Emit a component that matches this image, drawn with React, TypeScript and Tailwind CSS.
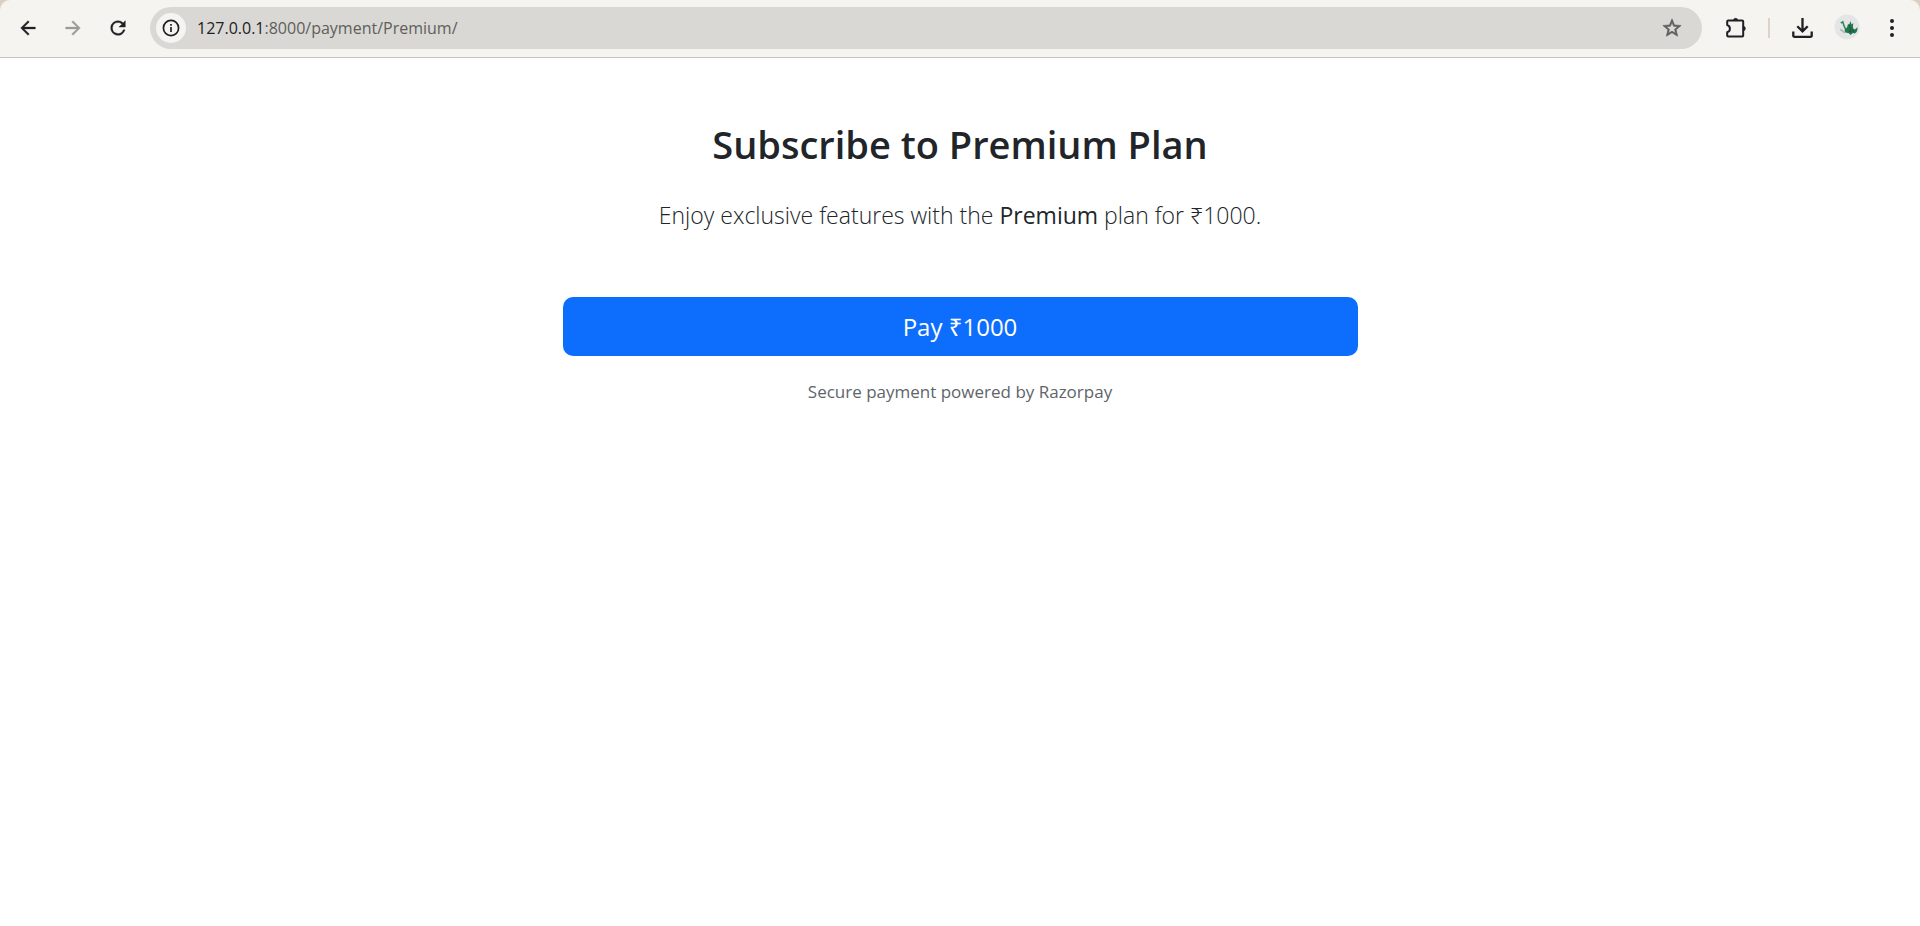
import type { ReactNode } from "react";

function ToolbarButton({ label, disabled, children }: { label: string; disabled?: boolean; children: ReactNode }) {
  return (
    <button
      type="button"
      aria-label={label}
      disabled={disabled}
      className="flex size-10 shrink-0 items-center justify-center rounded-full text-[#1f2023] disabled:text-[#9b9a98]"
    >
      {children}
    </button>
  );
}

function BrowserToolbar() {
  return (
    <div className="bg-[#ddd0c0]">
      <header className="flex h-[58px] items-center rounded-t-[10px] border-b border-[#c3c2c0] bg-[#f5f4f0] px-2 pb-px">
        <nav aria-label="Browser navigation" className="flex gap-[5px]">
          <ToolbarButton label="Back">
            <svg viewBox="0 0 24 24" className="size-[22px]" fill="currentColor" stroke="currentColor" strokeWidth="0.4">
              <path d="M20 11H7.83l5.59-5.59L12 4l-8 8 8 8 1.41-1.41L7.83 13H20z" />
            </svg>
          </ToolbarButton>
          <ToolbarButton label="Forward" disabled>
            <svg viewBox="0 0 24 24" className="size-[22px]" fill="currentColor" stroke="currentColor" strokeWidth="0.4">
              <path d="M12 4l-1.41 1.41L16.17 11H4v2h12.17l-5.58 5.59L12 20l8-8z" />
            </svg>
          </ToolbarButton>
          <ToolbarButton label="Reload">
            <svg viewBox="0 0 24 24" className="size-[22px]" fill="currentColor" stroke="currentColor" strokeWidth="0.4">
              <path d="M17.65 6.35A7.96 7.96 0 0 0 12 4a8 8 0 1 0 7.73 10h-2.08A6 6 0 1 1 12 6c1.66 0 3.14.69 4.22 1.78L13 11h7V4z" />
            </svg>
          </ToolbarButton>
        </nav>
        <div className="ml-3 flex h-[42px] min-w-0 flex-1 items-center rounded-full bg-[#d9d8d4] pr-2 pl-1.5">
          <button
            type="button"
            aria-label="View site information"
            className="flex size-[30px] shrink-0 items-center justify-center rounded-full bg-[#f5f4f0] text-[#1f2023]"
          >
            <svg viewBox="0 0 18 18" className="size-[18px]" fill="none" stroke="currentColor">
              <circle cx="9" cy="9" r="7.6" strokeWidth="1.7" />
              <path d="M9 8v5" strokeWidth="1.7" />
              <path d="M9 5v1.8" strokeWidth="1.7" />
            </svg>
          </button>
          <a href="#" className="ml-[11px] flex-1 truncate text-[16px] leading-6 text-[#5f5e5c]">
            <span className="text-[#1f2023]">127.0.0.1</span>:8000/payment/Premium/
          </a>
          <button
            type="button"
            aria-label="Bookmark this page"
            className="flex size-11 shrink-0 items-center justify-center text-[#5c5c5e]"
          >
            <svg viewBox="0 0 24 24" className="size-[22px]" fill="currentColor" stroke="currentColor" strokeWidth="0.6">
              <path d="M22 9.24l-7.19-.62L12 2 9.19 8.63 2 9.24l5.46 4.73L5.82 21 12 17.27 18.18 21l-1.63-7.03zM12 15.4l-3.76 2.27 1-4.28-3.32-2.88 4.38-.38L12 6.1l1.71 4.04 4.38.38-3.32 2.88 1 4.28z" />
            </svg>
          </button>
        </div>
        <div className="ml-[14px] flex items-center">
          <ToolbarButton label="Extensions">
            <svg viewBox="0 0 24 24" className="size-6" fill="none" stroke="currentColor" strokeWidth="2" strokeLinejoin="round">
              <path d="M4.2 4.500H18.200a1 1 0 0 1 1 1V19.500a1 1 0 0 1-1 1H4.200a1 1 0 0 1-1-1V16.200C6.800 15.200 6.800 10.200 3.200 9V5.500a1 1 0 0 1 1-1z" />
              <path d="M9.400 4.500a2.200 2.200 0 0 1 4.400 0zM19.200 10.300a2.200 2.200 0 0 1 0 4.400z" fill="currentColor" strokeWidth="0.6" />
            </svg>
          </ToolbarButton>
          <span className="mx-3 h-5 w-0.5 bg-[#dfd3c4]" />
          <ToolbarButton label="Downloads">
            <svg viewBox="0 0 24 24" className="size-6" fill="none" stroke="currentColor" strokeWidth="2.300">
              <path d="M12.500 2v13M7.300 10.200l5.200 5.200 5.200-5.200" />
              <path d="M3.300 15.500v4.200a1.200 1.200 0 0 0 1.200 1.200h16a1.200 1.200 0 0 0 1.200-1.200v-4.200" />
            </svg>
          </ToolbarButton>
          <span className="w-[5px]" />
          <ToolbarButton label="Profile">
            <svg viewBox="0 0 26 26" className="mb-0.5 size-[26px]">
              <circle cx="13" cy="13" r="12.5" fill="#e4e5e6" />
              <path d="M6 14.500l2.500 1 3 3.500-1.500.5-2-2-1.500-.5z" fill="#b0b8b5" />
              <path d="M6.800 9l2-1.200c.8 3.200 1.500 6.200 3.900 8.600" fill="none" stroke="#2b8a5e" strokeWidth="1.500" />
              <path d="M11 15l2-1.500 1-3.500 1.200.5 1.300-3.500 1 3.500 1.800-1.500-.4 4 1 2.500 1.600-.5 2-1.800c.2 3-.7 5.300-2.700 6.300l-1.800-.5-2.500 2-2-2-2.700-.2-1.300-1.800z" fill="#24784f" />
              <path d="M15.500 11l1 4-1.200 3 2.200-.5M18.500 15l1 3" fill="none" stroke="#164f38" strokeWidth="0.900" />
            </svg>
          </ToolbarButton>
          <span className="w-[5px]" />
          <ToolbarButton label="Browser menu">
            <svg viewBox="0 0 24 24" className="size-6" fill="currentColor">
              <circle cx="12" cy="5" r="2" />
              <circle cx="12" cy="12" r="2" />
              <circle cx="12" cy="19" r="2" />
            </svg>
          </ToolbarButton>
        </div>
      </header>
    </div>
  );
}

export default function App() {
  return (
    <div className="min-h-screen bg-white font-['Open_Sans','Noto_Sans',sans-serif] text-[#212529]">
      <BrowserToolbar />
      <main className="mx-auto flex max-w-[795px] flex-col pt-[60px] text-center">
        <h1 className="text-[38px] leading-[52px] font-semibold">Subscribe to Premium Plan</h1>
        <p className="mt-[26px] text-[23px] leading-[38px] font-light">
          Enjoy exclusive features with the <strong className="font-medium">Premium</strong> plan for ₹1000.
        </p>
        <button type="button" className="mt-[63px] h-[59px] rounded-[10px] bg-[#0d6efd] text-[24px] leading-8 text-white">
          Pay ₹1000
        </button>
        <p className="mt-6 text-[17px] leading-6 text-[#5e646a]">Secure payment powered by Razorpay</p>
      </main>
    </div>
  );
}
